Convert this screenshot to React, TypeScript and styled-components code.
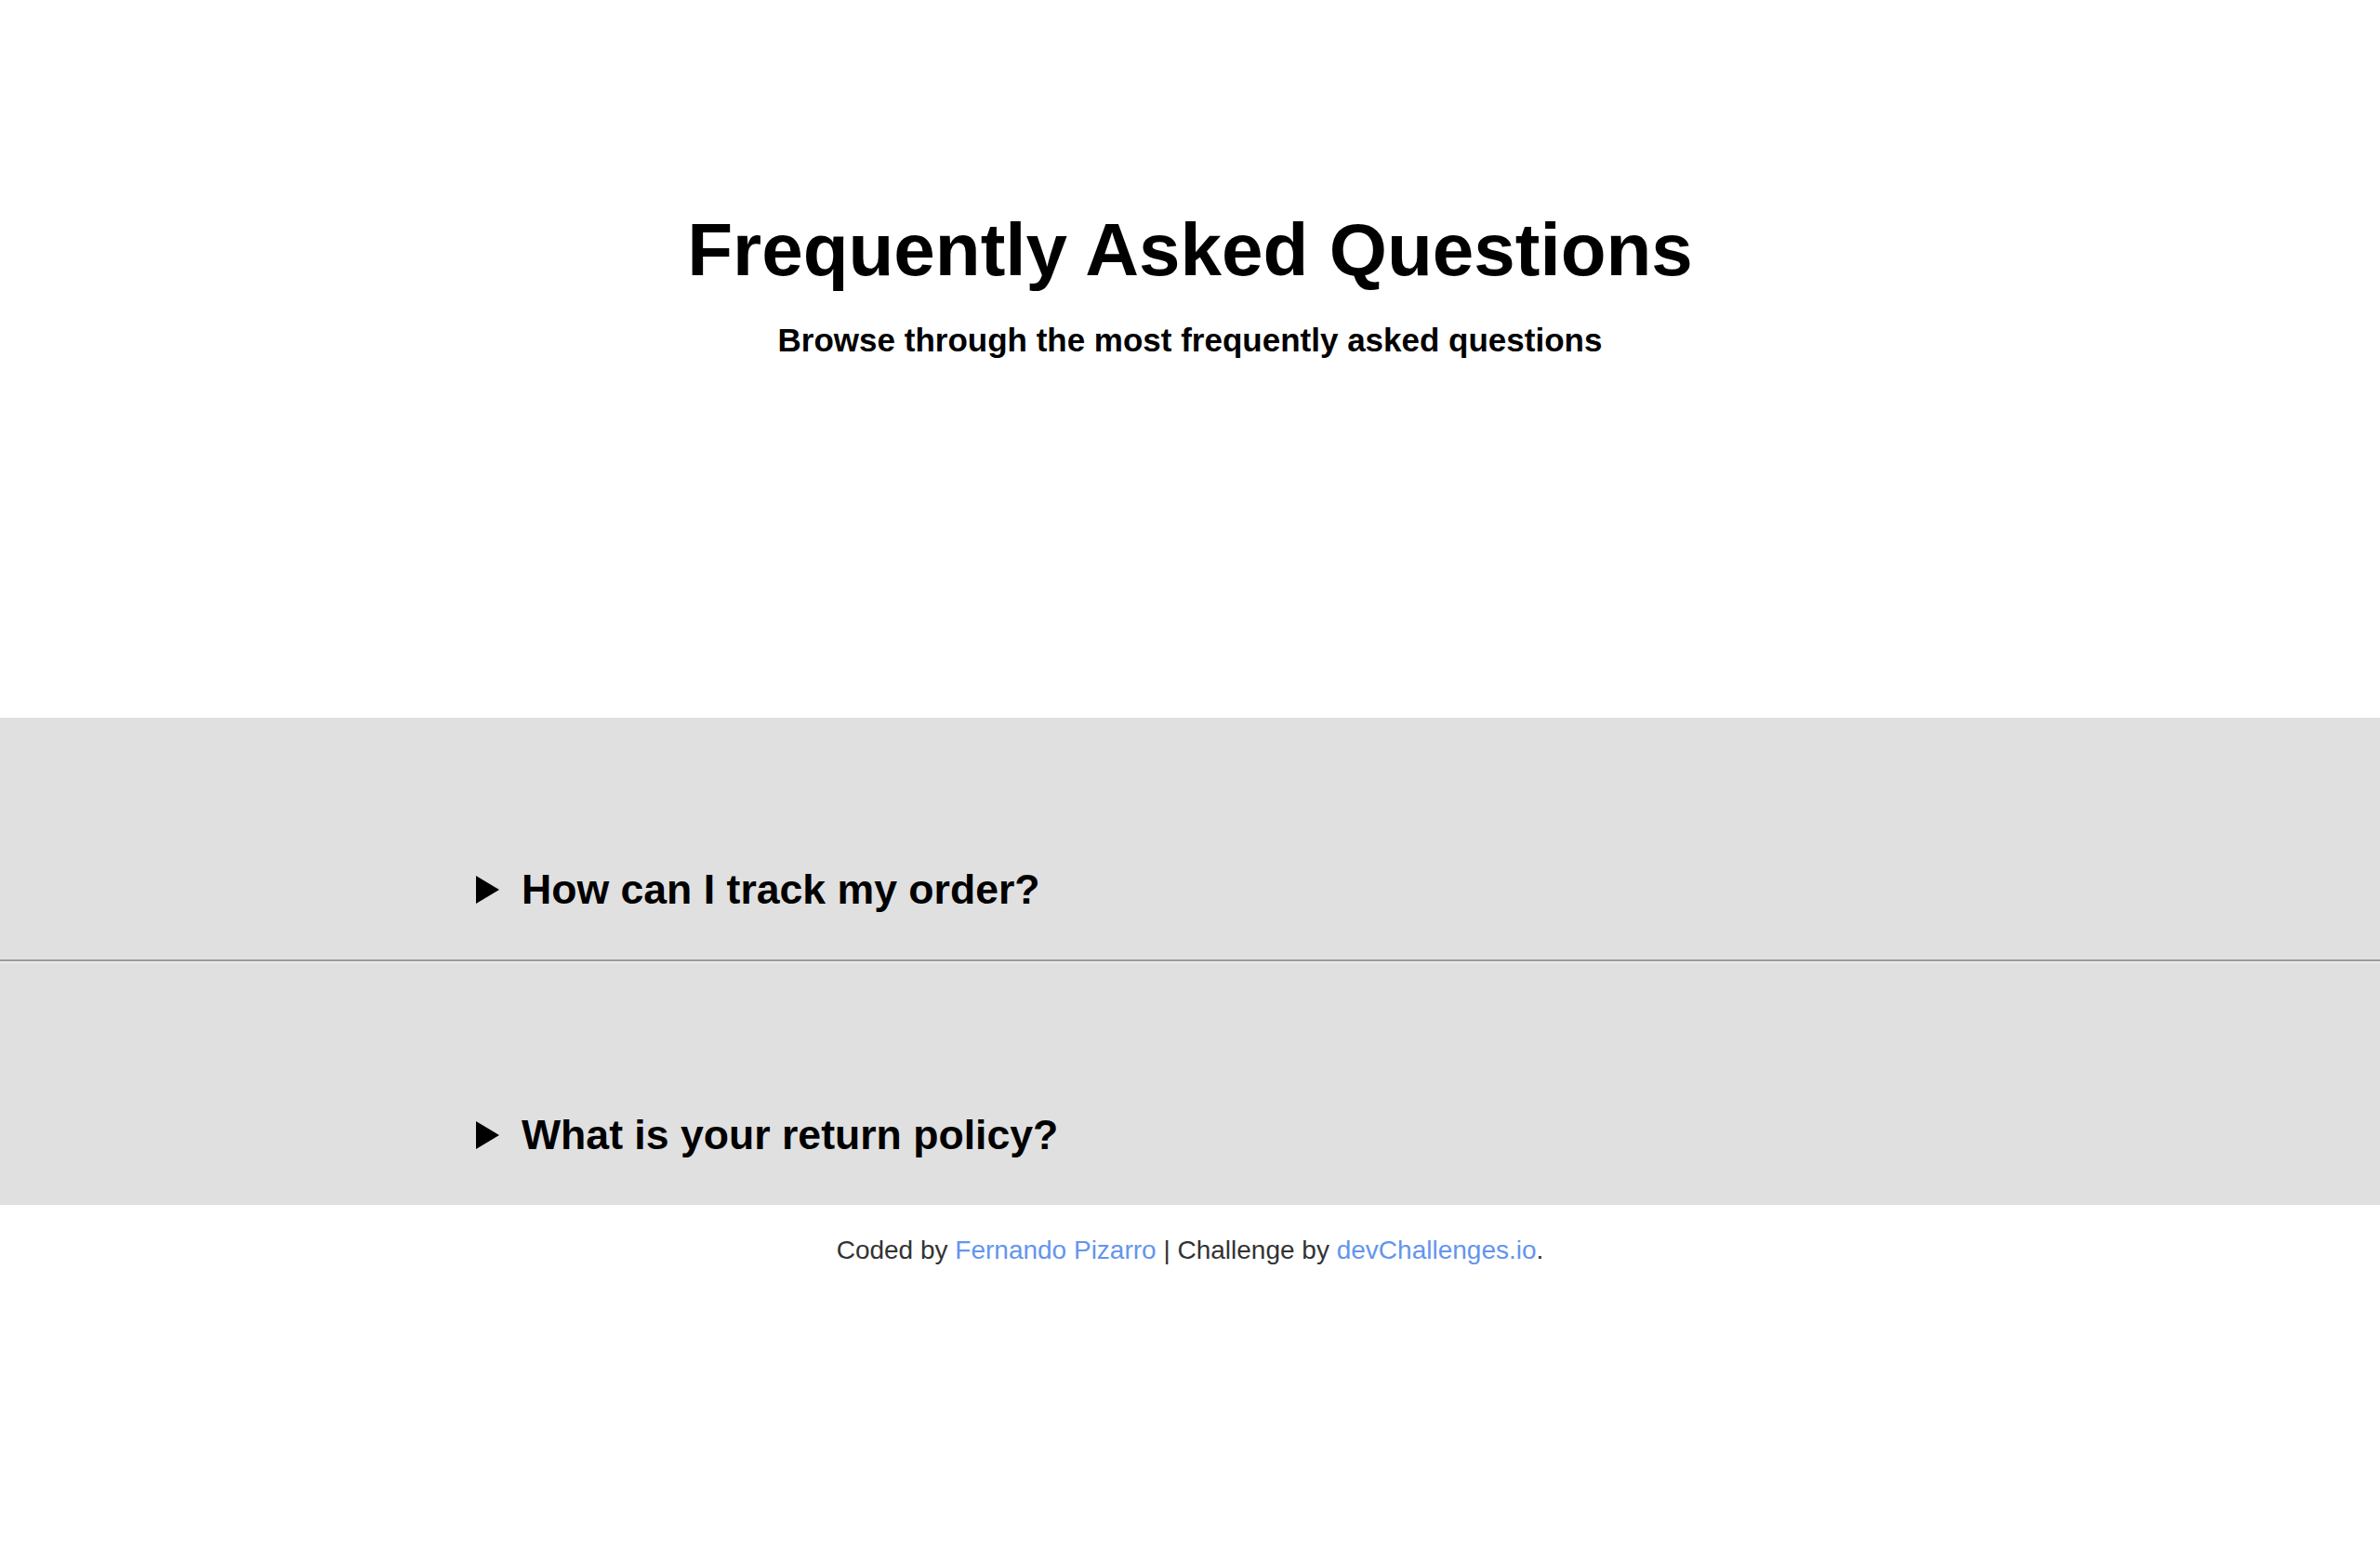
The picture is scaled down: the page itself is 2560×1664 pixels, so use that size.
import styled, {createGlobalStyle} from "styled-components";

const GlobalStyle = createGlobalStyle`
  * {
    box-sizing: border-box;
  }

  body {
    margin: 0;
    background: #ffffff;
    font-family: "Liberation Sans", Arial, sans-serif;
    color: #000000;
  }
`;

interface IQuestion {
  question: string;
  answer: string;
}

const questions: IQuestion[] = [
  {
    question: 'How can I track my order?',
    answer: 'Once your order ships you will receive an email with a tracking link.',
  },
  {
    question: 'What is your return policy?',
    answer: 'You can return any item within 30 days of delivery for a full refund.',
  },
];

const Arrow = () => (
  <ArrowIcon viewBox="0 0 25 30" aria-hidden="true">
    <path d="M0 0 L25 15 L0 30 Z" fill="#000"/>
  </ArrowIcon>
);

const App = () => {
  return (
    <>
      <GlobalStyle/>
      <Header>
        <Title>Frequently Asked Questions</Title>
        <Subtitle>Browse through the most frequently asked questions</Subtitle>
      </Header>
      <FaqSection>
        {questions.map((item, index) => (
          <div key={item.question}>
            {index > 0 && <Divider/>}
            <Item>
              <Summary>
                <Arrow/>
                <span>{item.question}</span>
              </Summary>
              <Answer>{item.answer}</Answer>
            </Item>
          </div>
        ))}
      </FaqSection>
      <Footer>
        Coded by <FooterLink href="#">Fernando Pizarro</FooterLink> | Challenge by{' '}
        <FooterLink href="#">devChallenges.io</FooterLink>.
      </Footer>
    </>
  );
};

const Header = styled.header`
  padding: 224px 0 386px;
  text-align: center;
`;

const Title = styled.h1`
  margin: 0;
  font-size: 80px;
  line-height: 90px;
  font-weight: bold;
`;

const Subtitle = styled.p`
  margin: 32px 0 0;
  font-size: 35px;
  line-height: 40px;
  font-weight: bold;
`;

const FaqSection = styled.section`
  background: #e0e0e0;
`;

const Divider = styled.hr`
  margin: 0;
  height: 0;
  border: none;
  border-top: 2px solid #9a9a9a;
  border-bottom: 2px solid #ebebeb;
`;

const Item = styled.details`
  padding: 159px 20% 49px;
`;

const Summary = styled.summary`
  display: flex;
  align-items: center;
  gap: 24px;
  list-style: none;
  cursor: pointer;
  font-size: 44.6px;
  line-height: 52px;
  font-weight: bold;

  &::-webkit-details-marker {
    display: none;
  }
`;

const ArrowIcon = styled.svg`
  width: 25px;
  height: 30px;
  flex-shrink: 0;
`;

const Answer = styled.p`
  margin: 24px 0 0 50px;
  font-size: 28px;
`;

const Footer = styled.footer`
  margin-top: 33px;
  text-align: center;
  font-size: 28px;
  line-height: 32px;
  color: #333333;
`;

const FooterLink = styled.a`
  color: #6495ed;
  text-decoration: none;
`;

export default App;
